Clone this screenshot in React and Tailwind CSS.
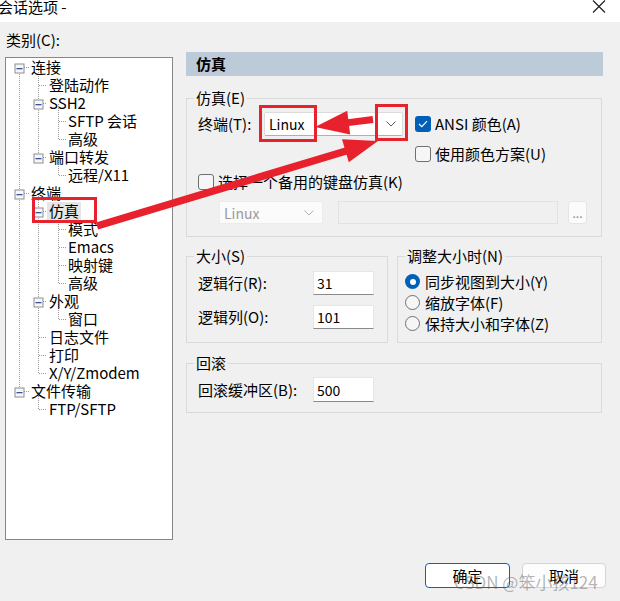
import React from 'react';

const TREE = [
  { l: 0, t: '连接', e: true },
  { l: 1, t: '登陆动作' },
  { l: 1, t: 'SSH2', e: true },
  { l: 2, t: 'SFTP 会话' },
  { l: 2, t: '高级' },
  { l: 1, t: '端口转发', e: true },
  { l: 2, t: '远程/X11' },
  { l: 0, t: '终端', e: true },
  { l: 1, t: '仿真', e: true, sel: true },
  { l: 2, t: '模式' },
  { l: 2, t: 'Emacs' },
  { l: 2, t: '映射键' },
  { l: 2, t: '高级' },
  { l: 1, t: '外观', e: true },
  { l: 2, t: '窗口' },
  { l: 1, t: '日志文件' },
  { l: 1, t: '打印' },
  { l: 1, t: 'X/Y/Zmodem' },
  { l: 0, t: '文件传输', e: true },
  { l: 1, t: 'FTP/SFTP' },
];
const CX = [13.5, 32.5, 52.5];
const PL = ['pl-[25px]', 'pl-[43px]', 'pl-[62px]'];
const TXN = [25, 43, 62];
const ry = (i) => 9.5 + 18 * i;

function TreeLines() {
  const lines = [];
  // L0 spine
  lines.push(<line key="spine" x1={CX[0]} y1={ry(0)} x2={CX[0]} y2={ry(18)} />);
  TREE.forEach((it, i) => {
    lines.push(
      <line key={'h' + i} x1={CX[it.l]} y1={ry(i)} x2={TXN[it.l] - 2} y2={ry(i)} />
    );
    if (it.e && it.l > 0) {
      let last = i;
      for (let j = i + 1; j < TREE.length && TREE[j].l > it.l; j++) {
        if (TREE[j].l === it.l + 1) last = j;
      }
      lines.push(<line key={'v' + i} x1={CX[it.l + 1]} y1={ry(i)} x2={CX[it.l + 1]} y2={ry(last)} />);
    }
    if (it.e && it.l === 0) {
      let last = i;
      for (let j = i + 1; j < TREE.length && TREE[j].l > 0; j++) {
        if (TREE[j].l === 1) last = j;
      }
      lines.push(<line key={'v' + i} x1={CX[1]} y1={ry(i)} x2={CX[1]} y2={ry(last)} />);
    }
  });
  const boxes = TREE.map((it, i) =>
    it.e ? (
      <g key={'b' + i}>
        <rect x={CX[it.l] - 4.5} y={ry(i) - 3.5} width="9" height="9" fill="#f7f7f7" stroke="#8e8e8e" />
        <rect x={CX[it.l] - 3} y={ry(i) + 0.5} width="6" height="1.3" fill="#3553a4" />
      </g>
    ) : null
  );
  return (
    <svg className="absolute left-0 top-0 pointer-events-none" width="166" height="481">
      <g stroke="#9a9a9a" strokeWidth="1" strokeDasharray="1 1" shapeRendering="crispEdges">
        {lines}
      </g>
      {boxes}
    </svg>
  );
}

function Chevron({ color = '#5c5c5c' }) {
  return (
    <svg width="10" height="6" viewBox="0 0 10 6">
      <polyline points="0.5,0.5 5,5 9.5,0.5" fill="none" stroke={color} strokeWidth="1" />
    </svg>
  );
}

function CheckBox({ checked, label, className = '' }) {
  return (
    <div className={'flex items-center gap-[4px] ' + className}>
      {checked ? (
        <div className="w-[16px] h-[16px] rounded-[3px] bg-[#005fb8] flex items-center justify-center">
          <svg width="10" height="8" viewBox="0 0 10 8">
            <polyline points="1,4 3.8,6.6 9,1.2" fill="none" stroke="white" strokeWidth="1.2" />
          </svg>
        </div>
      ) : (
        <div className="w-[16px] h-[16px] rounded-[3px] border border-[#6f6f6f] bg-[#f6f6f6]" />
      )}
      <span>{label}</span>
    </div>
  );
}

function Radio({ checked, label }) {
  return (
    <div className="h-[21px] flex items-center gap-[5px]">
      {checked ? (
        <div className="w-[15px] h-[15px] rounded-full bg-[#005fb8] flex items-center justify-center">
          <div className="w-[6px] h-[6px] rounded-full bg-white" />
        </div>
      ) : (
        <div className="w-[15px] h-[15px] rounded-full border border-[#707070] bg-[#f6f6f6]" />
      )}
      <span>{label}</span>
    </div>
  );
}

function NumInput({ value }) {
  return (
    <div className="w-[61px] h-[24px] bg-white border border-[#e6e6e6] border-b-[#8a8a8a] pl-[3px] flex items-center text-[14px]">
      {value}
    </div>
  );
}

export default function App() {
  return (
    <div className="relative w-[620px] h-[601px] overflow-hidden bg-[#f0f0f0] text-black font-['Noto_Sans_CJK_SC',sans-serif] text-[15px] leading-[18px] flex flex-col">
      {/* title bar */}
      <div className="h-[22px] shrink-0 bg-white flex items-start justify-between">
        <div className="ml-[-2px] text-[15px] leading-[13px]">会话选项 -</div>
        <svg className="mr-[14px]" width="14" height="14" viewBox="0 0 14 14">
          <path d="M1 0.5 L13 12.5 M13 0.5 L1 12.5" stroke="#1a1a1a" strokeWidth="1.1" fill="none" />
        </svg>
      </div>

      <div className="flex flex-1">
        {/* left */}
        <div className="ml-[5px] w-[168px] flex flex-col">
          <div className="mt-[9px] pl-[1px]">类别(C):</div>
          <div className="mt-[8px] h-[483px] border border-[#86868b] bg-white relative">
            <TreeLines />
            <div className="relative flex flex-col">
              {TREE.map((it, i) => (
                <div key={i} className={'h-[18px] flex items-center ' + (it.sel ? 'pl-[41px]' : PL[it.l])}>
                  <span className={it.sel ? 'px-[2px] bg-[#e5e5e5]' : ''}>{it.t}</span>
                </div>
              ))}
            </div>
          </div>
        </div>

        {/* right */}
        <div className="ml-[13px] w-[417px] flex flex-col">
          <div className="mt-[30px] h-[24px] bg-[#bdcbd9] pl-[10px] font-bold flex items-center">仿真</div>

          <fieldset className="mt-[13px] mr-[1px] border border-[#dadada] px-[11px] pb-[12px]">
            <legend className="ml-[-4px] px-[2px]">仿真(E)</legend>
            <div className="mt-[5px] flex items-start">
              <div className="flex items-center h-[24px]">
                <span className="w-[66px]">终端(T):</span>
                <div className="w-[139px] h-[24px] bg-white border border-[#dcdcdc] border-b-[#b0b0b0] rounded-[2px] flex items-center justify-between pl-[4px] pr-[6px] text-[14px]">
                  <span>Linux</span>
                  <Chevron />
                </div>
              </div>
              <div className="ml-[12px] flex flex-col gap-[6px]">
                <CheckBox checked label="ANSI 颜色(A)" className="h-[24px]" />
                <CheckBox label="使用颜色方案(U)" className="h-[24px]" />
              </div>
            </div>
            <CheckBox label="选择一个备用的键盘仿真(K)" className="mt-[7px] h-[18px] gap-[3px]" />
            <div className="mt-[10px] ml-[21px] flex items-center">
              <div className="w-[104px] h-[23px] bg-[#fbfbfb] border border-[#ececec] flex items-center justify-between pl-[4px] pr-[8px] text-[14px] text-[#9a9a9a]">
                <span>Linux</span>
                <Chevron color="#b0b0b0" />
              </div>
              <div className="ml-[15px] w-[220px] h-[23px] bg-[#f0f0f0] border border-[#e2e2e2]" />
              <div className="ml-[10px] w-[19px] h-[23px] bg-[#fbfbfb] border border-[#e5e5e5] rounded-[3px] flex items-center justify-center text-[12px] text-[#8a8a8a] leading-[10px]">
                ...
              </div>
            </div>
          </fieldset>

          <div className="mt-[10px] mr-[1px] flex gap-[9px]">
            <fieldset className="w-[202px] border border-[#dadada] px-[11px] pb-[13px]">
              <legend className="ml-[-4px] px-[2px]">大小(S)</legend>
              <div className="mt-[6px] flex items-center">
                <span className="w-[115px]">逻辑行(R):</span>
                <NumInput value="31" />
              </div>
              <div className="mt-[10px] flex items-center">
                <span className="w-[115px]">逻辑列(O):</span>
                <NumInput value="101" />
              </div>
            </fieldset>
            <fieldset className="flex-1 border border-[#dadada] px-[7px]">
              <legend className="ml-[0px] px-[2px]">调整大小时(N)</legend>
              <div className="mt-[6px] flex flex-col">
                <Radio checked label="同步视图到大小(Y)" />
                <Radio label="缩放字体(F)" />
                <Radio label="保持大小和字体(Z)" />
              </div>
            </fieldset>
          </div>

          <fieldset className="mt-[11px] mr-[1px] border border-[#dadada] px-[11px] pb-[10px]">
            <legend className="ml-[-4px] px-[2px]">回滚</legend>
            <div className="mt-[5px] flex items-center">
              <span className="w-[115px]">回滚缓冲区(B):</span>
              <div className="w-[61px] h-[25px] bg-white border border-[#e6e6e6] border-b-[#8a8a8a] pl-[3px] flex items-center text-[14px]">
                500
              </div>
            </div>
          </fieldset>
        </div>
      </div>

      {/* buttons */}
      <div className="shrink-0 flex justify-end gap-[12px] pr-[14px] pb-[13px]">
        <div className="w-[85px] h-[25px] bg-white border border-[#0067c0] rounded-[4px] flex items-center justify-center">确定</div>
        <div className="w-[84px] h-[25px] bg-[#fdfdfd] border border-[#d4d4d4] rounded-[4px] flex items-center justify-center">取消</div>
      </div>

      {/* watermark */}
      <div className="absolute left-[454px] top-[572px] text-[17px] leading-[20px] text-[rgba(90,90,90,0.45)] whitespace-nowrap pointer-events-none">
        CSDN @笨小孩124
      </div>

      {/* red annotations */}
      <svg className="absolute left-0 top-0 pointer-events-none" width="620" height="601">
        <g fill="none" stroke="#e8222c" strokeWidth="3">
          <rect x="33.5" y="198.5" width="62" height="23" />
          <rect x="260.5" y="106.5" width="55" height="34" />
          <rect x="376.5" y="105.5" width="30" height="34" />
        </g>
        <line x1="97" y1="226" x2="346" y2="151" stroke="#e8222c" strokeWidth="7.5" />
        <polygon points="378,141 342,139.3 348.8,162.3" fill="#e8222c" />
        <line x1="373" y1="119.5" x2="348" y2="122.6" stroke="#e8222c" strokeWidth="7" />
        <polygon points="315,127 350.2,134.5 347.2,110.7" fill="#e8222c" />
      </svg>
    </div>
  );
}
